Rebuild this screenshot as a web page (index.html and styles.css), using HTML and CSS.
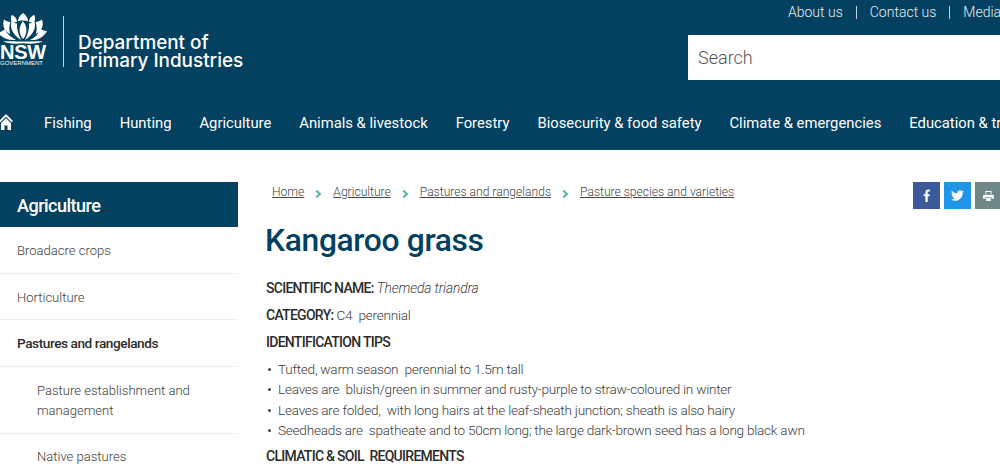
FILE: index.html
```html
<!DOCTYPE html>
<html lang="en">
<head>
<meta charset="utf-8">
<title>Kangaroo grass</title>
<link rel="stylesheet" href="styles.css">
</head>
<body>
<header class="site-header">
  <div class="header-top">
    <div class="brand">
      <div class="nsw-logo">
        <svg class="waratah" width="48" height="31" viewBox="0 0 48 38" preserveAspectRatio="none" aria-hidden="true">
          <g fill="#fff">
            <path d="M24 10C20 15 19 25 24 32C29 25 28 15 24 10Z"/>
            <path d="M24 0C21 3 19 6 19 10C21 9.500 23 9 24 9.500C25 9 27 9.500 29 10C29 6 27 3 24 0Z"/>
            <path d="M13 2C11 6 12 10 14 13C15.500 11.500 16.500 11 18 11C18 7 16 4 13 2Z"/>
            <path d="M35 2C37 6 36 10 34 13C32.500 11.500 31.500 11 30 11C30 7 32 4 35 2Z"/>
            <path d="M13 9C10 18 14 27 22 33C19 26 17.500 19 18 13C16 13 14.500 11.500 13 9Z"/>
            <path d="M35 9C38 18 34 27 26 33C29 26 30.500 19 30 13C32 13 33.500 11.500 35 9Z"/>
            <path d="M5 8C3 15 5 22 11 26C10 21 10 15 11.500 11C9 11 7 10 5 8Z"/>
            <path d="M43 8C45 15 43 22 37 26C38 21 38 15 36.500 11C39 11 41 10 43 8Z"/>
            <path d="M-1 24C2 30 9 34 17 33C12 30 8 26 6 20C4 22 2 23 -1 24Z"/>
            <path d="M48 22C45 29 39 34 31 33C36 30 40 26 41 19C43 21 45 22 48 22Z"/>
            <path d="M4 35C11 34 18 35 24 35C30 35 37 34 44 35C38 38 30 38 24 37C18 38 10 38 4 35Z"/>
          </g>
        </svg>
        <div class="nsw-word">NSW</div>
        <div class="gov-word">GOVERNMENT</div>
      </div>
      <div class="brand-rule"></div>
      <div class="dept-name">Department of<br>Primary Industries</div>
    </div>
    <div class="header-tools">
      <nav class="util-links">
        <a class="util-link">About us</a>
        <a class="util-link">Contact us</a>
        <a class="util-link">Media</a>
      </nav>
      <div class="search-box">Search</div>
    </div>
  </div>
  <nav class="main-nav">
    <a class="home-link" aria-label="Home">
      <svg width="14" height="18" viewBox="0 0 14 18" aria-hidden="true">
        <path d="M7 1L0 8L1.300 9.300L7 3.700L12.700 9.300L14 8Z" fill="#fff"/>
        <path d="M2 10L7 5.200L12 10V17H8.500V12.500H5.500V17H2Z" fill="#fff"/>
      </svg>
    </a>
    <a class="nav-link">Fishing</a>
    <a class="nav-link">Hunting</a>
    <a class="nav-link">Agriculture</a>
    <a class="nav-link">Animals &amp; livestock</a>
    <a class="nav-link">Forestry</a>
    <a class="nav-link">Biosecurity &amp; food safety</a>
    <a class="nav-link">Climate &amp; emergencies</a>
    <a class="nav-link">Education &amp; training</a>
  </nav>
</header>
<div class="page">
  <aside class="sidebar">
    <h2 class="side-title">Agriculture</h2>
    <a class="side-item">Broadacre crops</a>
    <a class="side-item">Horticulture</a>
    <a class="side-item side-active">Pastures and rangelands</a>
    <a class="side-item side-sub">Pasture establishment and management</a>
    <a class="side-item side-sub">Native pastures</a>
  </aside>
  <main class="content">
    <div class="content-top">
      <nav class="crumbs">
        <a class="crumb">Home</a><span class="crumb-sep"></span>
        <a class="crumb">Agriculture</a><span class="crumb-sep"></span>
        <a class="crumb">Pastures and rangelands</a><span class="crumb-sep"></span>
        <a class="crumb">Pasture species and varieties</a>
      </nav>
      <div class="share">
        <a class="share-btn share-fb" aria-label="Facebook">
          <svg width="8" height="13" viewBox="0 0 10 15" preserveAspectRatio="none" aria-hidden="true"><path d="M3 15V8.500H.8V6H3V4.200C3 1.800 4.400.6 6.500.6C7.500.6 8.300.7 8.600.7V3H7.200C6.100 3 5.900 3.500 5.900 4.300V6H8.500L8.200 8.500H5.900V15Z" fill="#fff"/></svg>
        </a>
        <a class="share-btn share-tw" aria-label="Twitter">
          <svg width="13" height="11" viewBox="0 0 16 13" aria-hidden="true"><path d="M16 1.500C15.400 1.800 14.800 2 14.100 2C14.800 1.600 15.300.9 15.600.2C14.900.6 14.200.9 13.500 1C12.800.3 12 0 11 0C9.200 0 7.800 1.500 7.800 3.300C7.800 3.500 7.800 3.800 7.900 4C5.200 3.900 2.800 2.600 1.100.6C.8 1.100.7 1.600.7 2.200C.7 3.300 1.300 4.300 2.100 4.900C1.600 4.900 1.100 4.700.7 4.500C.7 6.100 1.800 7.400 3.300 7.700C2.800 7.900 2.300 7.900 1.800 7.800C2.200 9.100 3.400 10 4.900 10C3.400 11.200 1.800 11.700 0 11.500C1.500 12.500 3.200 13 5 13C11 13 14.300 8 14.300 3.700V3.200C15 2.800 15.600 2.200 16 1.500Z" fill="#fff"/></svg>
        </a>
        <a class="share-btn share-pr" aria-label="Print">
          <svg width="11" height="10" viewBox="0 0 14 13" aria-hidden="true"><path d="M3 0H11V4H9.800V1.200H4.200V4H3Z M1.500 5H12.500C13.300 5 14 5.700 14 6.500V10H11V8H3V10H0V6.500C0 5.700 .7 5 1.500 5Z M4 9H10V13H4Z" fill="#fff"/></svg>
        </a>
      </div>
    </div>
    <h1 class="page-title">Kangaroo grass</h1>
    <p class="para"><b class="label">SCIENTIFIC NAME:</b> <em class="latin">Themeda triandra</em></p>
    <p class="para"><b class="label">CATEGORY:</b> C4&nbsp; perennial</p>
    <p class="para para-head"><b class="label">IDENTIFICATION TIPS</b></p>
    <ul class="tips">
      <li>Tufted, warm season&nbsp; perennial to 1.5m tall</li>
      <li>Leaves are&nbsp; bluish/green in summer and rusty-purple to straw-coloured in winter</li>
      <li>Leaves are folded,&nbsp; with long hairs at the leaf-sheath junction; sheath is also hairy</li>
      <li>Seedheads are&nbsp; spatheate and to 50cm long; the large dark-brown seed has a long black awn</li>
    </ul>
    <p class="para para-head"><b class="label">CLIMATIC &amp; SOIL&nbsp; REQUIREMENTS</b></p>
  </main>
</div>
</body>
</html>
```
FILE: styles.css
```css
* { box-sizing: border-box; }
html, body { margin: 0; height: 472px; overflow: hidden; background: #fff; }
body { font-family: Roboto, "Liberation Sans", sans-serif; font-weight: 300; color: #3d3d3d; font-size: 13.600px; letter-spacing: -.25px; width: 1000px; }
a { color: inherit; text-decoration: none; }

.site-header { height: 150px; background: #04405f; color: #fff; overflow: hidden; letter-spacing: 0; }
.header-top { display: flex; height: 97px; }
.brand { display: flex; align-items: flex-start; width: 688px; padding-top: 13px; flex: none; }
.nsw-logo { width: 47px; margin-left: -1px; flex: none; }
.waratah { display: block; }
.nsw-word { font: 700 20px/16px "Liberation Sans", sans-serif; padding-left: 1px; letter-spacing: -.3px; }
.gov-word { font: 400 6px/7px "Liberation Sans", sans-serif; padding-left: 1px; white-space: nowrap; }
.brand-rule { width: 1px; height: 51px; margin: 3px 0 0 17px; background: #c3d2da; flex: none; }
.dept-name { font: 500 18.900px/18px "Inter", sans-serif; margin: 21px 0 0 14px; white-space: nowrap; }
.header-tools { flex: none; width: 312px; }
.util-links { display: flex; height: 35px; padding: 6px 0 0 100px; font-size: 14px; white-space: nowrap; }
.util-link { padding-right: 13px; margin-right: 13px; height: 13px; line-height: 13px; border-right: 1px solid #c3d2da; color: #e6eef2; }
.util-link:last-child { border: 0; }
.search-box { height: 45px; background: #fff; color: #555; font-size: 18px; line-height: 45px; padding-left: 10px; }
.main-nav { display: flex; align-items: center; gap: 28px; height: 53px; white-space: nowrap; font-size: 14.800px; font-weight: 400; padding-bottom: 2px; }
.home-link { display: flex; flex: none; width: 17px; margin-left: -1px; padding-bottom: 2px; }
.nav-link { flex: none; }

.page { display: flex; padding-top: 32px; }
.sidebar { width: 238px; flex: none; font-size: 13.050px; letter-spacing: 0; }
.side-title { margin: 0; height: 45px; line-height: 47px; padding-left: 17px; background: #04405f; color: #fff; font-size: 18px; font-weight: 500; letter-spacing: -.5px; }
.side-item { display: block; padding: 14px 17px 12px; line-height: 20px; border-bottom: 1px solid #eeeeee; height: 46.500px; }
.side-active { font-weight: 500; color: #2b2b2b; letter-spacing: -.42px; font-size: 13.600px; padding: 13px 17px; }
.side-sub { padding-left: 37px; height: auto; }
.side-sub:last-child { border: 0; padding-top: 13px; }

.content { flex: 1; padding-left: 28px; min-width: 0; }
.content-top { display: flex; justify-content: space-between; height: 33px; margin-right: -2px; }
.crumbs { display: flex; align-items: center; padding: 0 0 0 6px; font-size: 12.100px; letter-spacing: 0; height: 19px; white-space: nowrap; }
.crumb { text-decoration: underline; color: #444; }
.crumb-sep { width: 6px; height: 6px; margin: 4px 13px 0 10px; border-top: 2px solid #5cb8ad; border-right: 2px solid #5cb8ad; transform: rotate(45deg); flex: none; }
.share { display: flex; gap: 4px; }
.share-btn { width: 27px; height: 27px; display: flex; align-items: center; justify-content: center; }
.share-fb { background: #3b5a9a; }
.share-tw { background: #1f96e8; }
.share-pr { background: #6f8787; }
.page-title { margin: 1px 0 7px -1px; color: #04405f; font-size: 31.800px; line-height: 48px; font-weight: 500; letter-spacing: -.35px; }
.para { margin: 0; line-height: 20px; padding-top: 7px; }
.tips + .para-head { padding-top: 6px; }
.label { font-weight: 500; color: #2b2b2b; letter-spacing: -.72px; font-size: 14px; }
.latin { font-size: 13.800px; letter-spacing: -.15px; }
.tips { list-style: none; margin: 7px 0 0; padding: 0; }
.tips li { line-height: 20.300px; padding-left: 12px; position: relative; }
.tips li::before { content: ""; position: absolute; left: 2px; top: 9px; width: 3px; height: 3px; border-radius: 50%; background: #444; }
```
